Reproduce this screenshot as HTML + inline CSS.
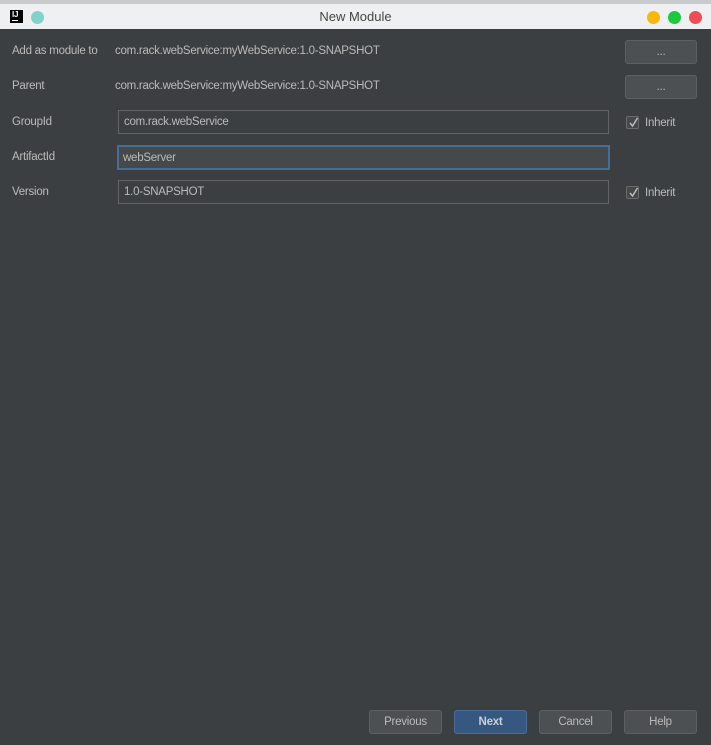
<!DOCTYPE html>
<html><head><style>
*{margin:0;padding:0;box-sizing:border-box}
body{width:711px;height:745px;background:#3c3f41;font-family:"Liberation Sans","DejaVu Sans",sans-serif;font-size:11.5px;letter-spacing:-0.25px;color:#bbbbbb;position:relative;overflow:hidden}
.a{position:absolute}
.title{left:0;top:0;width:711px;height:29px;background:#eff0f1;border-top:4px solid #c9cacc}
.lbl{left:12px;color:#bbbbbb}
.val{left:115px;color:#bbbbbb}
.btn{background:#4c5052;border:1px solid #5e6060;border-radius:3px;color:#bbbbbb;text-align:center;line-height:23px}
.fld{left:118px;width:491px;height:24px;border:1px solid #646464;background:#3c3f41;padding-left:5px;line-height:23px;color:#bbbbbb}
.cb{left:626px;width:13px;height:13px;border:1px solid #6b6b6b;border-radius:2px;background:#43494a}
.cb svg{position:absolute;left:1px;top:0}
</style></head><body>
<div class="a title"></div>
<div class="a" style="left:10px;top:10px;width:13px;height:13px;background:#000"><div class="a" style="left:2px;top:1px;color:#fff;font-size:8px;font-weight:bold;line-height:8px">IJ</div><div class="a" style="left:2px;top:10px;width:6px;height:1px;background:#fff"></div></div>
<div class="a" style="left:31px;top:11px;width:13px;height:13px;border-radius:50%;background:#7ed3ca"></div>
<div class="a" style="left:0;top:9px;width:711px;text-align:center;color:#444;font-size:13px;letter-spacing:0">New Module</div>
<div class="a" style="left:647px;top:11px;width:13px;height:13px;border-radius:50%;background:#f8b80c"></div>
<div class="a" style="left:668px;top:11px;width:13px;height:13px;border-radius:50%;background:#19c93e"></div>
<div class="a" style="left:689px;top:11px;width:13px;height:13px;border-radius:50%;background:#ef4d55"></div>

<div class="a lbl" style="top:45px">Add as module to</div>
<div class="a val" style="top:45px">com.rack.webService:myWebService:1.0-SNAPSHOT</div>
<div class="a btn" style="left:625px;top:40px;width:72px;height:24px">...</div>
<div class="a lbl" style="top:80px">Parent</div>
<div class="a val" style="top:80px">com.rack.webService:myWebService:1.0-SNAPSHOT</div>
<div class="a btn" style="left:625px;top:75px;width:72px;height:24px">...</div>

<div class="a lbl" style="top:116px">GroupId</div>
<div class="a fld" style="top:110px">com.rack.webService</div>
<div class="a lbl" style="top:151px">ArtifactId</div>
<div class="a fld" style="left:117px;top:145px;width:493px;height:25px;border:2px solid #466d94;background:#45494a;padding-left:4px;line-height:22px">webServer</div>
<div class="a lbl" style="top:186px">Version</div>
<div class="a fld" style="top:180px">1.0-SNAPSHOT</div>

<div class="a cb" style="top:116px"><svg width="11" height="11"><path d="M2 6 L4.5 9 L9.5 1" stroke="#bbb" stroke-width="1.5" fill="none"/></svg></div>
<div class="a" style="left:645px;top:117px">Inherit</div>
<div class="a cb" style="top:186px"><svg width="11" height="11"><path d="M2 6 L4.5 9 L9.5 1" stroke="#bbb" stroke-width="1.5" fill="none"/></svg></div>
<div class="a" style="left:645px;top:187px">Inherit</div>

<div class="a btn" style="left:369px;top:710px;width:73px;height:24px">Previous</div>
<div class="a btn" style="left:454px;top:710px;width:73px;height:24px;background:#365880;border-color:#4b6d96;font-weight:bold;color:#c8d0d8">Next</div>
<div class="a btn" style="left:539px;top:710px;width:73px;height:24px">Cancel</div>
<div class="a btn" style="left:624px;top:710px;width:73px;height:24px">Help</div>
</body></html>
